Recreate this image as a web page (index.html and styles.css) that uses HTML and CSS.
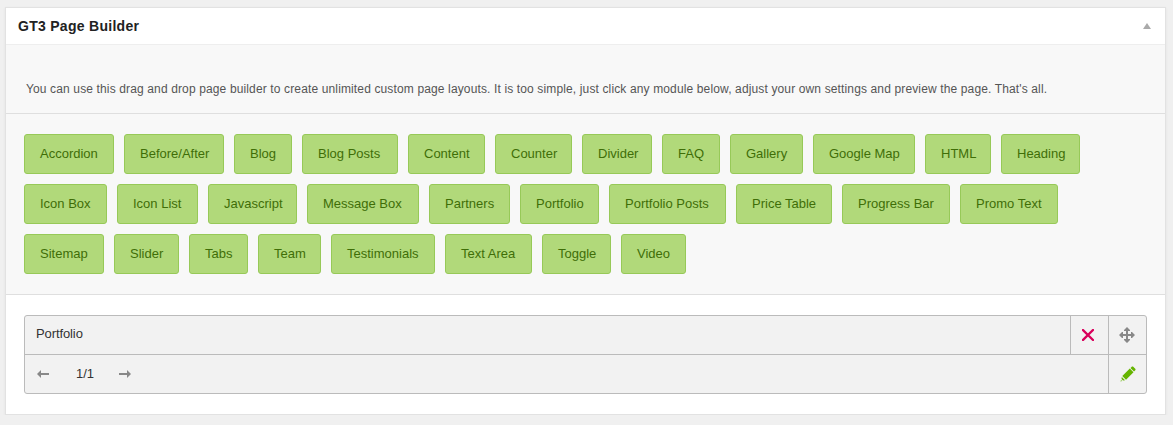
FILE: index.html
```html
<!DOCTYPE html>
<html lang="en">
<head>
<meta charset="utf-8">
<title>GT3 Page Builder</title>
<link rel="stylesheet" href="styles.css">
</head>
<body>
<section class="panel">
  <header class="panel-header">
    <h3 class="panel-title">GT3 Page Builder</h3>
    <svg class="collapse" width="8" height="6" viewBox="0 0 8 6"><path d="M4 0L8 6H0Z" fill="#aaa"/></svg>
  </header>
  <p class="intro"><span class="intro-text">You can use this drag and drop page builder to create unlimited custom page layouts. It is too simple, just click any module below, adjust your own settings and preview the page. That's all.</span></p>
  <div class="modules">
    <div class="row row-first">
      <a class="module">Accordion</a><a class="module">Before/After</a><a class="module">Blog</a><a class="module">Blog Posts</a><a class="module">Content</a><a class="module">Counter</a><a class="module">Divider</a><a class="module">FAQ</a><a class="module">Gallery</a><a class="module">Google Map</a><a class="module">HTML</a><a class="module">Heading</a>
    </div>
    <div class="row row-second">
      <a class="module">Icon Box</a><a class="module">Icon List</a><a class="module">Javascript</a><a class="module">Message Box</a><a class="module">Partners</a><a class="module">Portfolio</a><a class="module">Portfolio Posts</a><a class="module">Price Table</a><a class="module">Progress Bar</a><a class="module">Promo Text</a>
    </div>
    <div class="row row-third">
      <a class="module">Sitemap</a><a class="module">Slider</a><a class="module">Tabs</a><a class="module">Team</a><a class="module">Testimonials</a><a class="module">Text Area</a><a class="module">Toggle</a><a class="module">Video</a>
    </div>
  </div>
  <div class="canvas">
    <div class="item">
      <div class="item-bar item-top">
        <span class="item-name">Portfolio</span>
        <span class="tool tool-delete"><svg width="12" height="12" viewBox="0 0 12 12"><path d="M1 1L11 11M11 1L1 11" stroke="#d9005b" stroke-width="2.3" stroke-linecap="square"/></svg></span>
        <span class="tool"><svg width="16" height="16" viewBox="0 0 16 16"><path d="M8 1V15M1 8H15" stroke="#888" stroke-width="2"/><path d="M8 0L11 3V4H5V3ZM8 16L11 13V12H5V13ZM0 8L3 5H4V11H3ZM16 8L13 5H12V11H13Z" fill="#888"/></svg></span>
      </div>
      <div class="item-bar">
        <span class="sizer">
          <svg width="12" height="8" viewBox="0 0 12 8"><path d="M0 4L4 0V3H12V5H4V8Z" fill="#888"/></svg>
          <span class="size">1/1</span>
          <svg width="12" height="8" viewBox="0 0 12 8"><path d="M12 4L8 0V3H0V5H8V8Z" fill="#888"/></svg>
        </span>
        <span class="tool tool-edit"><svg width="16" height="16" viewBox="0 0 16 16"><path d="M12 .5H13L15.500 3V4L14 5.500L10.500 2ZM9.800 2.500L13.500 6.200L6 13.700L2.300 10ZM1.800 11L5 14.200L3 14.500L1.500 13ZM1 14L2 15L.5 15.500Z" fill="#65b400"/></svg></span>
      </div>
    </div>
  </div>
</section>
</body>
</html>
```
FILE: styles.css
```css
body {
  margin: 0;
  padding: 7px 7px 0 5px;
  background: #f0f0f0;
  font-family: "Liberation Sans", Arial, sans-serif;
  font-size: 13px;
}
.panel {
  box-sizing: border-box;
  height: 408px;
  border: 1px solid #e2e2e2;
  background: #fff;
  box-shadow: 0 1px 3px rgba(0, 0, 0, .06);
}
.panel-header {
  display: flex;
  align-items: center;
  justify-content: space-between;
  height: 36px;
  padding: 0 14px 0 12px;
  border-bottom: 1px solid #eee;
}
.panel-title {
  margin: 0;
  font-size: 14px;
  line-height: 36px;
  letter-spacing: .28px;
  color: #222;
}
.collapse { margin-bottom: 1px; }
.intro {
  height: 68px;
  margin: 0;
  padding-left: 20px;
  background: #f8f8f8;
  border-bottom: 1px solid #dfdfdf;
  font-size: 12px;
  line-height: 88px;
  letter-spacing: .135px;
  color: #555;
  white-space: nowrap;
}
.modules {
  display: grid;
  align-content: start;
  gap: 10px;
  height: 160px;
  padding: 20px 18px 0;
  background: #f8f8f8;
  border-bottom: 1px solid #dfdfdf;
}
.row { display: grid; gap: 10px; }
.row-first { grid-template-columns: 90px 100px 58px 96px 77px 77px 70px 58px 73px 102px 66px 79px; }
.row-second { grid-template-columns: 83px 81px 89px 112px 81px 79px 117px 96px 108px 98px; }
.row-third { grid-template-columns: 80px 65px 59px 63px 104px 87px 69px 65px; }
.module {
  box-sizing: border-box;
  height: 40px;
  padding-left: 15px;
  border: 1px solid #97c958;
  border-radius: 3px;
  background: #b1d97a;
  color: #3f6e08;
  line-height: 38px;
  white-space: nowrap;
}
.canvas { padding: 20px 18px; }
.item {
  border: 1px solid #bbb;
  border-radius: 3px;
  background: #f2f2f2;
}
.item-bar { display: flex; height: 38px; }
.item-top { border-bottom: 1px solid #bbb; }
.item-name {
  flex: 1;
  padding-left: 11px;
  line-height: 36px;
  letter-spacing: -.1px;
  color: #333;
}
.tool {
  box-sizing: border-box;
  display: flex;
  align-items: center;
  justify-content: center;
  width: 38px;
  padding-right: 1px;
  border-left: 1px solid #bbb;
}
.tool-delete { padding-right: 3px; }
.tool-edit { padding-right: 0; }
.sizer {
  display: flex;
  flex: 1;
  align-items: center;
  padding-left: 12px;
}
.size {
  box-sizing: border-box;
  width: 70px;
  padding-left: 2px;
  line-height: 38px;
  text-align: center;
  color: #333;
}
```
